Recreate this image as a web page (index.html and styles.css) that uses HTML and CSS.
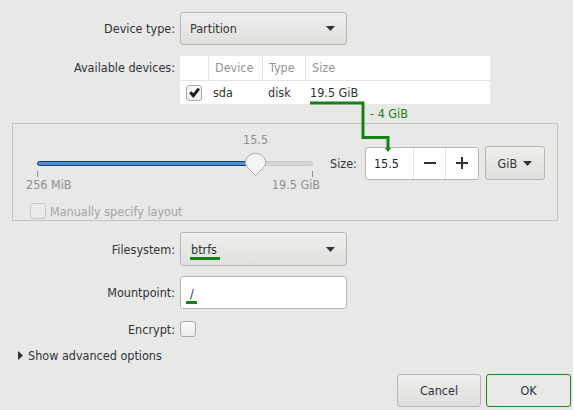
FILE: index.html
```html
<!DOCTYPE html>
<html>
<head>
<meta charset="utf-8">
<link rel="stylesheet" href="styles.css">
</head>
<body>
<div class="dialog">
  <div class="row row-type">
    <div class="label">Device type:</div>
    <div class="combo">
      <span>Partition</span>
      <svg class="arrow" width="9" height="5" viewBox="0 0 9 5"><path d="M0 0H9L4.5 5Z" fill="#2e3436"/></svg>
    </div>
  </div>

  <div class="row row-devices">
    <div class="label label-top">Available devices:</div>
    <div class="devtable">
      <div class="dt-head">
        <div class="c c0"></div>
        <div class="c c1">Device</div>
        <div class="c c2">Type</div>
        <div class="c c3">Size</div>
      </div>
      <div class="dt-row">
        <div class="c c0">
          <span class="check checked">
            <svg width="13" height="13" viewBox="0 0 13 13"><path d="M2.3 6.3L5.3 9.6L10.9 2.6" fill="none" stroke="#1b1e1f" stroke-width="3"/></svg>
          </span>
        </div>
        <div class="c c1">sda</div>
        <div class="c c2">disk</div>
        <div class="c c3">19.5 GiB</div>
      </div>
    </div>
  </div>

  <div class="frame">
    <div class="frame-main">
      <div class="scale">
        <div class="scale-value-row">
          <span class="scale-value" style="left:79.2%">15.5</span>
        </div>
        <div class="trough">
          <div class="fill" style="width:79.2%"></div>
          <svg class="knob" style="left:79.2%" width="21" height="24" viewBox="0 0 21 24"><path d="M10.5 0.5C16 0.5 20.5 4.5 20.5 9.5C20.5 12.5 19 14 17.5 15.5L10.5 22.5L3.5 15.5C2 14 0.5 12.5 0.5 9.5C0.5 4.5 5 0.5 10.5 0.5Z" fill="#f4f4f3" stroke="#a8a8a6"/></svg>
        </div>
        <div class="ticks"><span></span><span></span></div>
        <div class="scale-labels"><span>256 MiB</span><span>19.5 GiB</span></div>
        <div class="manual">
          <span class="check disabled"></span>
          <span>Manually specify layout</span>
        </div>
      </div>
      <div class="size-group">
        <span class="size-label">Size:</span>
        <div class="spin">
          <div class="spin-entry">15.5</div>
          <div class="spin-btn">
            <svg width="12" height="12" viewBox="0 0 12 12"><path d="M0 6H12" stroke="#2e3436" stroke-width="2"/></svg>
          </div>
          <div class="spin-btn">
            <svg width="12" height="12" viewBox="0 0 12 12"><path d="M0 6H12M6 0V12" stroke="#2e3436" stroke-width="2"/></svg>
          </div>
        </div>
        <div class="unit">
          <span>GiB</span>
          <svg class="arrow" width="9" height="5" viewBox="0 0 9 5"><path d="M0 0H9L4.5 5Z" fill="#2e3436"/></svg>
        </div>
      </div>
    </div>
  </div>

  <div class="row row-fs">
    <div class="label">Filesystem:</div>
    <div class="combo">
      <span class="mark">btrfs</span>
      <svg class="arrow" width="9" height="5" viewBox="0 0 9 5"><path d="M0 0H9L4.5 5Z" fill="#2e3436"/></svg>
    </div>
  </div>

  <div class="row row-mount">
    <div class="label">Mountpoint:</div>
    <div class="entry"><span class="mark mark-slash">/</span></div>
  </div>

  <div class="row row-encrypt">
    <div class="label">Encrypt:</div>
    <div><span class="check"></span></div>
  </div>

  <div class="expander">
    <svg width="5" height="9" viewBox="0 0 5 9"><path d="M0 0L5 4.5L0 9Z" fill="#2e3436"/></svg>
    <span>Show advanced options</span>
  </div>

  <div class="actions">
    <div class="btn">Cancel</div>
    <div class="btn btn-ok">OK</div>
  </div>

  <svg class="annot" width="573" height="410" viewBox="0 0 573 410">
    <path d="M310 103H363V137.5H388V149" fill="none" stroke="#138413" stroke-width="3"/>
    <path d="M385 148H391L388 152Z" fill="#138413"/>
  </svg>
  <span class="annot-text">- 4 GiB</span>
</div>
</body>
</html>
```

FILE: styles.css
```css
html, body {
  margin: 0;
  padding: 0;
  background: #e8e8e7;
}
body {
  font-family: "DejaVu Sans Condensed", "DejaVu Sans", sans-serif;
  font-stretch: condensed;
  font-size: 12.5px;
  color: #2e3436;
}
.dialog {
  position: relative;
  width: 573px;
  height: 410px;
  padding-top: 12px;
  box-sizing: border-box;
  overflow: hidden;
}
.row {
  display: grid;
  grid-template-columns: 175px 167px;
  column-gap: 5px;
  align-items: center;
}
.label {
  text-align: right;
  white-space: nowrap;
}
.label-top {
  align-self: start;
  line-height: 24px;
}
.combo {
  height: 33px;
  box-sizing: border-box;
  border: 1px solid #b6b6b3;
  border-radius: 3px;
  background: linear-gradient(#eeeeec, #e0e0dd);
  display: flex;
  align-items: center;
  justify-content: space-between;
  padding: 0 11px 0 9px;
}
.row-devices {
  margin-top: 11px;
  grid-template-columns: 175px 310px;
}
.devtable {
  background: #fff;
}
.dt-head, .dt-row {
  display: grid;
  grid-template-columns: 28px 54px 43px 1fr;
}
.dt-head {
  height: 24px;
  line-height: 24px;
  color: #929595;
  border-bottom: 1px solid #e3e3e1;
}
.dt-head .c + .c {
  border-left: 1px solid #e3e3e1;
}
.dt-head .c1 { padding-left: 6px; }
.dt-head .c2 { padding-left: 6px; }
.dt-head .c3 { padding-left: 6px; }
.dt-row {
  height: 23px;
  align-items: center;
}
.dt-row .c1 { padding-left: 5px; }
.dt-row .c2 { padding-left: 6px; }
.dt-row .c3 { padding-left: 5px; }
.dt-row .c0 {
  display: flex;
  padding-left: 6px;
}
.check {
  display: inline-flex;
  align-items: center;
  justify-content: center;
  width: 16px;
  height: 16px;
  box-sizing: border-box;
  border: 1px solid #a9a9a6;
  border-radius: 3px;
  background: linear-gradient(#fafaf9, #ececea);
  vertical-align: middle;
}
.check.disabled {
  border-color: #c8c8c5;
  background: #ebebea;
}
.frame {
  margin: 19px 0 0 12px;
  width: 546px;
  height: 98px;
  box-sizing: border-box;
  border: 1px solid #c4c4c1;
  padding: 7px 0 0 13px;
}
.frame-main {
  display: flex;
  align-items: flex-start;
}
.scale {
  width: 294px;
}
.scale-value-row {
  position: relative;
  height: 17px;
  margin: 0 7px 0 11px;
}
.scale-value {
  position: absolute;
  top: 0;
  transform: translateX(-50%);
  line-height: 17px;
  color: #8d9091;
}
.trough {
  position: relative;
  margin: 13px 7px 0 11px;
  height: 5px;
  box-sizing: border-box;
  border: 1px solid #c6c6c4;
  border-radius: 3px;
  background: #d6d6d4;
}
.fill {
  position: absolute;
  left: -1px;
  top: -1px;
  height: 5px;
  box-sizing: border-box;
  border: 1px solid #1d3f66;
  border-radius: 3px;
  background: #4a90d9;
}
.knob {
  position: absolute;
  top: -9px;
  margin-left: -10px;
}
.ticks {
  display: flex;
  justify-content: space-between;
  margin: 5px 7px 0 11px;
  height: 6px;
}
.ticks span {
  width: 1px;
  background: #8d9091;
}
.scale-labels {
  display: flex;
  justify-content: space-between;
  line-height: 16px;
  color: #8d9091;
}
.manual {
  display: flex;
  align-items: center;
  gap: 4px;
  margin: 10px 0 0 4px;
  color: #a3a5a5;
}
.size-group {
  display: flex;
  align-items: center;
  margin: 15px 0 0 10px;
}
.size-label {
  margin-right: 8px;
}
.spin {
  display: flex;
  width: 114px;
  height: 33px;
  box-sizing: border-box;
  border: 1px solid #b6b6b3;
  border-radius: 3px;
  background: #fff;
}
.spin-entry {
  width: 47px;
  line-height: 31px;
  padding-left: 8px;
  box-sizing: border-box;
  color: #1b1e1f;
}
.spin-btn {
  flex: 1;
  display: flex;
  align-items: center;
  justify-content: center;
  border-left: 1px solid #e4e4e2;
}
.unit {
  margin-left: 6px;
  width: 60px;
  height: 34px;
  box-sizing: border-box;
  border: 1px solid #b6b6b3;
  border-radius: 3px;
  background: linear-gradient(#eeeeec, #dededb);
  display: flex;
  align-items: center;
  justify-content: center;
  gap: 6px;
}
.row-fs {
  margin-top: 11px;
}
.row-fs .combo {
  height: 34px;
}
.mark {
  display: inline-block;
  border-bottom: 3px solid #138413;
  line-height: 15px;
  padding: 0 3px 0 1px;
  margin-top: 4px;
}
.row-mount {
  margin-top: 10px;
}
.entry {
  height: 33px;
  box-sizing: border-box;
  border: 1px solid #b6b6b3;
  border-radius: 3px;
  background: #fff;
  display: flex;
  align-items: center;
  padding-left: 5px;
}
.mark-slash {
  padding: 0 3px 0 4px;
}
.row-encrypt {
  margin-top: 12px;
}
.row-encrypt .check {
  display: flex;
}
.expander {
  display: flex;
  align-items: center;
  gap: 5px;
  margin: 10px 0 0 18px;
  line-height: 17px;
}
.actions {
  display: flex;
  justify-content: flex-end;
  gap: 5px;
  margin: 10px 2px 0 0;
}
.btn {
  width: 84px;
  height: 33px;
  box-sizing: border-box;
  border: 1px solid #b6b6b3;
  border-radius: 3px;
  background: linear-gradient(#eeeeec, #dededb);
  display: flex;
  align-items: center;
  justify-content: center;
}
.btn-ok {
  width: 85px;
  border-color: #148a14;
  background: #e9e9e8;
}
.annot {
  position: absolute;
  left: 0;
  top: 0;
  pointer-events: none;
}
.annot-text {
  position: absolute;
  left: 370px;
  top: 106px;
  font-size: 12.5px;
  line-height: 16px;
  color: #138413;
}
```
